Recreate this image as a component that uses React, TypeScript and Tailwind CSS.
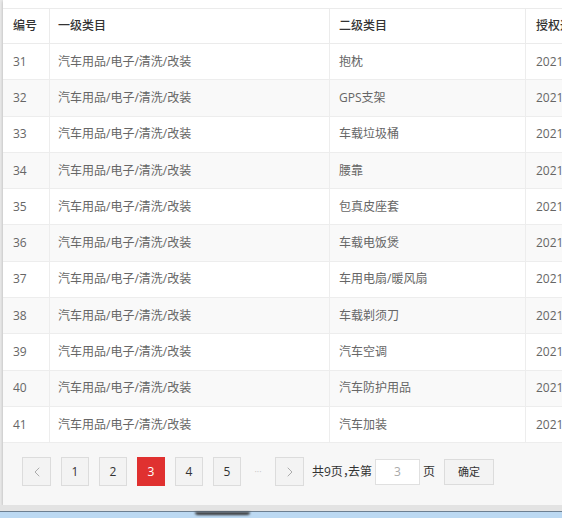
import { ChevronLeft, ChevronRight } from 'lucide-react';

const rows = [
  { id: 31, sub: '抱枕' },
  { id: 32, sub: 'GPS支架' },
  { id: 33, sub: '车载垃圾桶' },
  { id: 34, sub: '腰靠' },
  { id: 35, sub: '包真皮座套' },
  { id: 36, sub: '车载电饭煲' },
  { id: 37, sub: '车用电扇/暖风扇' },
  { id: 38, sub: '车载剃须刀' },
  { id: 39, sub: '汽车空调' },
  { id: 40, sub: '汽车防护用品' },
  { id: 41, sub: '汽车加装' },
];

const cols = 'grid grid-cols-[46px_280px_196px_100px]';

export default function App() {
  return (
    <div
      className="w-[562px] h-[518px] overflow-hidden bg-[#e9e9e9] flex flex-col text-[12px]"
      style={{ fontFamily: '"Open Sans", "Noto Sans CJK SC", sans-serif' }}
    >
      <div className="flex-1 flex flex-col pl-[3px]">
        <div className="flex-1 flex flex-col bg-white shadow-[0_1px_3px_rgba(0,0,0,0.25)] overflow-hidden">
          <div className="h-[8px] bg-white" />
          {/* header */}
          <div className={`${cols} h-[36px] border-y border-[#ebebeb] text-[#333] font-medium`}>
            <div className="flex items-center pl-[10px]">编号</div>
            <div className="flex items-center pl-[8px] border-l border-[#ebebeb]">一级类目</div>
            <div className="flex items-center pl-[9px] border-l border-[#ebebeb]">二级类目</div>
            <div className="flex items-center pl-[10px] border-l border-[#ebebeb] whitespace-nowrap">授权递增</div>
          </div>
          {rows.map((r, i) => (
            <div
              key={r.id}
              className={`${cols} h-[36.3px] border-b border-[#ededed] text-[#666] ${i % 2 ? 'bg-[#f9f9f9]' : 'bg-white'}`}
            >
              <div className="flex items-center pl-[10px]">{r.id}</div>
              <div className="flex items-center pl-[8px] border-l border-[#ededed]">汽车用品/电子/清洗/改装</div>
              <div className="flex items-center pl-[9px] border-l border-[#ededed]">{r.sub}</div>
              <div className="flex items-center pl-[10px] border-l border-[#ededed]">2021</div>
            </div>
          ))}
          {/* pagination */}
          <div className="flex-1 bg-[#f7f7f7] flex items-start pt-[14px] pl-[19px] text-[#333]">
            <div className="flex items-center gap-[10px]">
              <button className="w-[29px] h-[29px] border border-[#dcdcdc] bg-[#f3f3f3] flex items-center justify-center text-[#999]">
                <ChevronLeft size={16} strokeWidth={1.2} />
              </button>
              {[1, 2, 3, 4, 5].map((n) => (
                <button
                  key={n}
                  className={`w-[28px] h-[29px] flex items-center justify-center ${
                    n === 3 ? 'bg-[#e03130] text-white border border-[#e03130]' : 'bg-[#f3f3f3] border border-[#dcdcdc] text-[#333]'
                  }`}
                >
                  {n}
                </button>
              ))}
              <span className="w-[14px] text-center text-[#c4c4c4] text-[9px]">···</span>
              <button className="w-[29px] h-[29px] border border-[#dcdcdc] bg-[#f3f3f3] flex items-center justify-center text-[#999]">
                <ChevronRight size={16} strokeWidth={1.2} />
              </button>
            </div>
            <div className="flex items-center h-[29px] ml-[8px]">
              <span>共9页</span>
              <span className="inline-block w-[5px] overflow-hidden">，</span>
              <span>去第</span>
              <div className="ml-[3px] w-[45px] h-[26px] bg-white border border-[#e0e0e0] flex items-center justify-center text-[#aaa]">3</div>
              <span className="ml-[3px]">页</span>
              <button className="ml-[9px] w-[50px] h-[26px] border border-[#dcdcdc] bg-[#f3f3f3] text-[#333] text-[11px]">确定</button>
            </div>
          </div>
        </div>
      </div>
      <div className="h-[6px] bg-[#e3e3e3]" />
      <div className="h-[7px] bg-[#bcd9f2] border-t border-[#6c7f91] relative">
        <div className="absolute left-[195px] top-0 w-[55px] h-[3px] bg-[#333] rounded-b-full blur-[1px]" />
      </div>
    </div>
  );
}
